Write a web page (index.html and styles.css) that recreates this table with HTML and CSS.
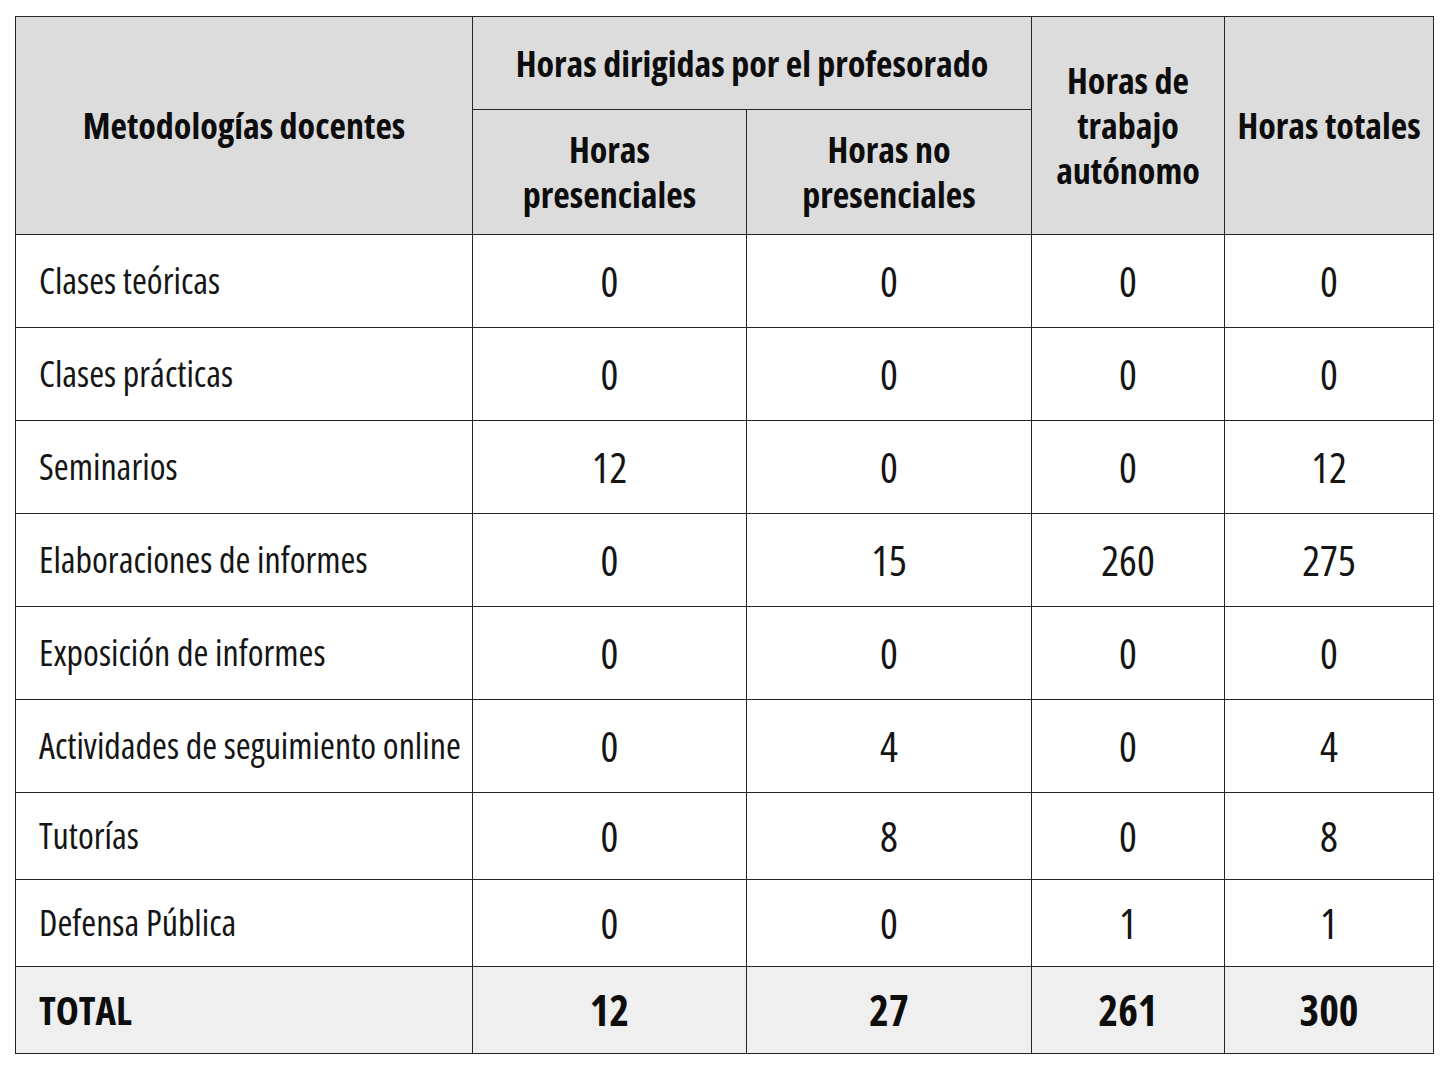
FILE: index.html
```html
<!DOCTYPE html>
<html lang="es">
<head>
<meta charset="utf-8">
<title>Metodologías docentes</title>
<link rel="stylesheet" href="styles.css">
</head>
<body>
<table class="hours">
  <colgroup>
    <col class="c1"><col class="c2"><col class="c3"><col class="c4"><col class="c5">
  </colgroup>
  <thead>
    <tr class="h1">
      <th rowspan="2">Metodologías docentes</th>
      <th colspan="2">Horas dirigidas por el profesorado</th>
      <th rowspan="2">Horas de<br>trabajo<br>autónomo</th>
      <th rowspan="2">Horas totales</th>
    </tr>
    <tr class="h2">
      <th>Horas<br>presenciales</th>
      <th>Horas no<br>presenciales</th>
    </tr>
  </thead>
  <tbody>
    <tr class="r"><td class="name">Clases teóricas</td><td>0</td><td>0</td><td>0</td><td>0</td></tr>
    <tr class="r"><td class="name">Clases prácticas</td><td>0</td><td>0</td><td>0</td><td>0</td></tr>
    <tr class="r"><td class="name">Seminarios</td><td>12</td><td>0</td><td>0</td><td>12</td></tr>
    <tr class="r"><td class="name">Elaboraciones de informes</td><td>0</td><td>15</td><td>260</td><td>275</td></tr>
    <tr class="r"><td class="name">Exposición de informes</td><td>0</td><td>0</td><td>0</td><td>0</td></tr>
    <tr class="r"><td class="name">Actividades de seguimiento online</td><td>0</td><td>4</td><td>0</td><td>4</td></tr>
    <tr class="s"><td class="name">Tutorías</td><td>0</td><td>8</td><td>0</td><td>8</td></tr>
    <tr class="s"><td class="name">Defensa Pública</td><td>0</td><td>0</td><td>1</td><td>1</td></tr>
    <tr class="s total"><td class="name">TOTAL</td><td>12</td><td>27</td><td>261</td><td>300</td></tr>
  </tbody>
</table>
</body>
</html>
```

FILE: styles.css
```css
html, body {
  margin: 0;
  background: #ffffff;
}
body {
  padding: 16px 0 0 15px;
  font-family: "Open Sans", "Liberation Sans", sans-serif;
  font-stretch: 75%;
  color: #111;
}
.hours {
  border-collapse: collapse;
  width: 1418px;
  table-layout: fixed;
}
.c1 { width: 457px; }
.c2 { width: 274px; }
.c3 { width: 285px; }
.c4 { width: 193px; }
.c5 { width: 209px; }
.hours th, .hours td {
  border: 1.5px solid #262626;
  padding: 0;
  text-align: center;
  vertical-align: middle;
  white-space: nowrap;
}
.hours th {
  background: #dcdcdc;
  font-weight: 700;
  font-size: 36px;
  line-height: 45px;
  color: #0d0d0d;
}
.h1 th { height: 92px; }
.h2 th { height: 124px; }
.hours td {
  font-size: 42px;
  line-height: 44px;
  font-weight: 400;
  color: #151515;
}
.r td { height: 92px; }
.s td { height: 86px; }
.hours td.name {
  text-align: left;
  padding-left: 23px;
  font-size: 36px;
}
.total td {
  background: #efefef;
  font-weight: 700;
  color: #0d0d0d;
}
.hours .total td.name {
  font-size: 39px;
}
```
